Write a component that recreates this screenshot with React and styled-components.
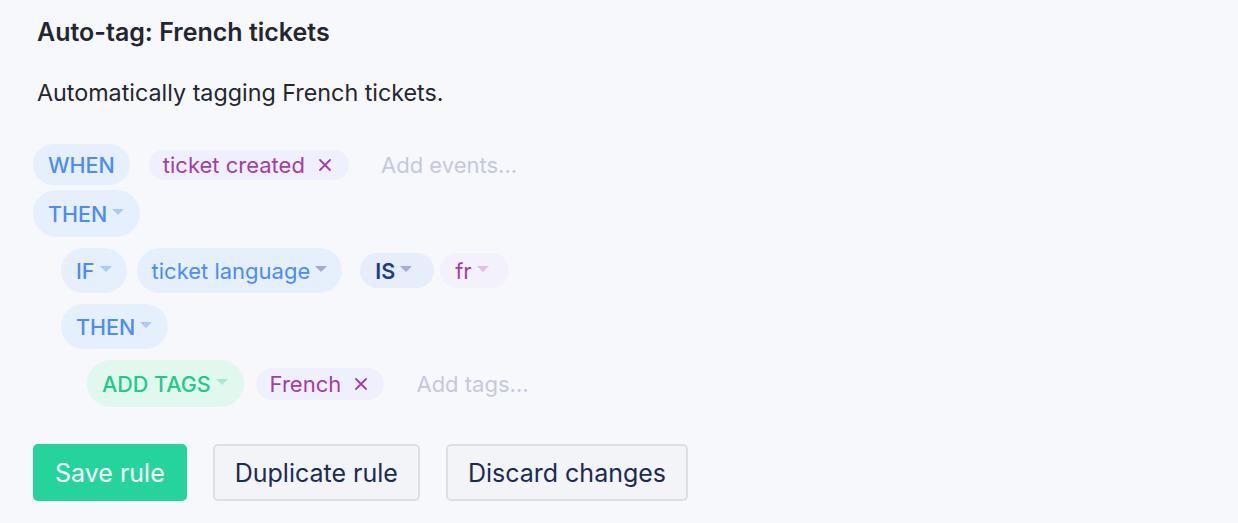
import styled, { createGlobalStyle } from "styled-components";

const GlobalStyle = createGlobalStyle`
    * { box-sizing: border-box; }
    body {
        margin: 0;
        background: #f7f8fc;
        font-family: 'Inter', 'Noto Sans', sans-serif;
        color: #23262f;
    }
`

const palette = {
    blue: { bg: "#e6f0fd", fg: "#4b8cf5", caret: "#a9c8f8" },
    field: { bg: "#e6f0fd", fg: "#4b8cf5", caret: "#a3aacb" },
    navy: { bg: "#e6edfb", fg: "#1e3a8a", caret: "#a5aed6" },
    purple: { bg: "#f3f1fc", fg: "#a23ea8", caret: "#e3bde8" },
    green: { bg: "#e1f8ef", fg: "#22c98e", caret: "#a8e9d0" },
}

function Caret({ color }) {
    return (
        <svg width="12" height="6" viewBox="0 0 12 6">
            <path d="M0 0 L12 0 L6 6 Z" fill={color} />
        </svg>
    )
}

function Cross() {
    return (
        <svg width="12" height="12" viewBox="0 0 12 12">
            <path d="M1 1 L11 11 M11 1 L1 11" stroke="#a23ea8" strokeWidth="1.8" strokeLinecap="round" />
        </svg>
    )
}

function Select({ tone, h, pr, children }) {
    const c = palette[tone]
    return (
        <SelectPill $bg={c.bg} $fg={c.fg} $h={h} $pr={pr}>
            {children}
            <Caret color={c.caret} />
        </SelectPill>
    )
}

export default function App() {
    return (
        <>
            <GlobalStyle />
            <Page>
                <Title>Auto-tag: French tickets</Title>
                <Description>Automatically tagging French tickets.</Description>

                <Rules>
                    <Row $indent={0} $gap={19}>
                        <Keyword>WHEN</Keyword>
                        <Chip $pr={18}>ticket created <Cross /></Chip>
                        <Placeholder $offset={13}>Add events...</Placeholder>
                    </Row>
                    <Row $indent={0} $top={5}>
                        <Select tone="blue" h={47}>THEN</Select>
                    </Row>
                    <Row $indent={28} $top={11} $gap={10}>
                        <Select tone="blue" h={45} pr={15}>IF</Select>
                        <Select tone="field" h={45} pr={15}><Regular>ticket language</Regular></Select>
                        <Pair>
                            <Select tone="navy" h={35} pr={22}><Strong>IS</Strong></Select>
                            <Select tone="purple" h={35} pr={20}><Regular>fr</Regular></Select>
                        </Pair>
                    </Row>
                    <Row $indent={28} $top={11}>
                        <Select tone="blue" h={45}>THEN</Select>
                    </Row>
                    <Row $indent={54} $top={11} $gap={12}>
                        <Select tone="green" h={47}>ADD TAGS</Select>
                        <Chip $h={32} $pr={17}>French <Cross /></Chip>
                        <Placeholder $offset={20}>Add tags...</Placeholder>
                    </Row>
                </Rules>

                <Actions>
                    <Button $primary>Save rule</Button>
                    <Button>Duplicate rule</Button>
                    <Button>Discard changes</Button>
                </Actions>
            </Page>
        </>
    )
}

const Page = styled.div`
    padding: 17px 33px;
`

const Title = styled.h1`
    margin: 0 0 0 4px;
    font-size: 25px;
    font-weight: 600;
    line-height: 30px;
    color: #23262f;
`

const Description = styled.p`
    margin: 31px 0 0 4px;
    font-size: 23.3px;
    line-height: 30px;
    color: #23262f;
`

const Rules = styled.div`
    margin-top: 36px;
    display: flex;
    flex-direction: column;
`

const Row = styled.div`
    display: flex;
    align-items: center;
    gap: ${(p) => p.$gap || 0}px;
    margin-left: ${(p) => p.$indent}px;
    margin-top: ${(p) => p.$top || 0}px;
`

const Keyword = styled.span`
    height: 41px;
    padding: 0 15px;
    border-radius: 21px;
    background: #e6f0fd;
    color: #4b8cf5;
    font-size: 21.5px;
    font-weight: 500;
    display: flex;
    align-items: center;
`

const SelectPill = styled.span`
    height: ${(p) => p.$h}px;
    padding: 0 ${(p) => p.$pr || 16}px 0 15px;
    border-radius: ${(p) => p.$h / 2}px;
    background: ${(p) => p.$bg};
    color: ${(p) => p.$fg};
    font-size: 21.5px;
    font-weight: 500;
    display: flex;
    align-items: center;
    gap: 5px;

    svg {
        margin-top: -3px;
    }
`

const Regular = styled.span`
    font-size: 22px;
    font-weight: 400;
`

const Strong = styled.span`
    font-weight: 600;
`

const Pair = styled.div`
    display: flex;
    align-items: center;
    gap: 6px;
    margin-left: 8px;
`

const Chip = styled.span`
    height: ${(p) => p.$h || 30}px;
    padding: 0 ${(p) => p.$pr}px 0 14px;
    border-radius: 16px;
    background: #eef0fd;
    color: #a23ea8;
    font-size: 22px;
    display: flex;
    align-items: center;
    gap: 8px;
    white-space: pre;
`

const Placeholder = styled.span`
    margin-left: ${(p) => p.$offset}px;
    font-size: 22px;
    color: #c5c9dc;
`

const Actions = styled.div`
    margin-top: 37px;
    display: flex;
    gap: 26px;
`

const Button = styled.button`
    height: 57px;
    padding: 0 20px;
    border-radius: 5px;
    font-family: 'Inter', sans-serif;
    font-size: 25px;
    font-weight: 400;
    cursor: pointer;
    border: 2px solid ${(p) => (p.$primary ? "#25d49b" : "#dedfe5")};
    background: ${(p) => (p.$primary ? "#25d49b" : "#f3f4f7")};
    color: ${(p) => (p.$primary ? "#ffffff" : "#1b2b52")};
`
